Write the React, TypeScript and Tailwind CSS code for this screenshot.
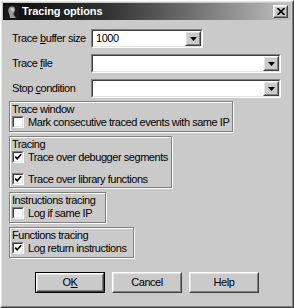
import React from "react";

const raisedOuter =
  "border border-t-white border-l-white border-r-[#404040] border-b-[#404040]";
const raisedInner =
  "border border-t-[#e4e4e4] border-l-[#e4e4e4] border-r-[#808080] border-b-[#808080]";
const sunkenOuter =
  "border border-t-[#808080] border-l-[#808080] border-r-white border-b-white";
const sunkenInner =
  "border border-t-[#404040] border-l-[#404040] border-r-[#e4e4e4] border-b-[#e4e4e4]";

function U({ children }: { children: React.ReactNode }) {
  return <span className="underline underline-offset-[1px]">{children}</span>;
}

function Check({ checked }: { checked?: boolean }) {
  return (
    <span className={`relative block w-[12px] h-[12px] shrink-0 bg-white ${sunkenOuter}`}>
      <span className={`absolute inset-0 ${sunkenInner}`} />
      {checked && (
        <svg
          className="absolute left-0 top-0"
          width="10"
          height="10"
          viewBox="0 0 10 10"
        >
          <path d="M2.2 4.6 L4.2 6.8 L8.2 2.3" fill="none" stroke="#000" strokeWidth="1.7" />
        </svg>
      )}
    </span>
  );
}

function Combo({ w, value }: { w: string; value?: string }) {
  return (
    <div className={`${w} h-[19px] bg-white ${sunkenOuter}`}>
      <div className={`flex h-full w-full ${sunkenInner}`}>
        <div className="flex-1 pl-[3px] leading-[15px]">{value}</div>
        <div className={`w-[16px] h-full bg-[#cacaca] ${raisedOuter}`}>
          <div className={`h-full w-full flex items-center justify-center ${raisedInner}`}>
            <svg width="7" height="4" viewBox="0 0 7 4">
              <path d="M0 0 H7 L3.5 4 Z" fill="#000" />
            </svg>
          </div>
        </div>
      </div>
    </div>
  );
}

function Group({
  w,
  h,
  title,
  children,
}: {
  w: string;
  h: string;
  title: string;
  children: React.ReactNode;
}) {
  return (
    <div
      className={`${w} ${h} border border-[#808080] shadow-[1px_1px_0_#fff,inset_1px_1px_0_#fff] pl-[2px]`}
    >
      <div className="h-[14px] leading-[14px]">{title}</div>
      {children}
    </div>
  );
}

function Row({ checked, label, extra }: { checked?: boolean; label: string; extra?: string }) {
  return (
    <div className={`flex items-center gap-[4px] h-[12px] ${extra ?? ""}`}>
      <Check checked={checked} />
      <span className="leading-[12px]">{label}</span>
    </div>
  );
}

function Button({ children, def }: { children: React.ReactNode; def?: boolean }) {
  const inner = (
    <div className={`h-full w-full bg-[#cacaca] ${raisedOuter}`}>
      <div className={`h-full w-full flex items-center justify-center ${raisedInner}`}>
        {children}
      </div>
    </div>
  );
  return def ? (
    <div className="w-[70px] h-[21px] border border-black">{inner}</div>
  ) : (
    <div className="w-[70px] h-[21px]">{inner}</div>
  );
}

export default function App() {
  return (
    <div
      className={`w-[294px] h-[308px] bg-[#cacaca] ${raisedOuter} font-['Liberation_Sans',Arial,sans-serif] text-[11px] tracking-[-0.45px] text-black`}
    >
      <div className={`h-full w-full p-[1px] ${raisedInner}`}>
        {/* Title bar */}
        <div className="h-[17px] flex items-center bg-linear-to-r from-[#0c0c0c] via-[#303030] via-35% to-[#c2c2c2]">
          <svg className="ml-[1px]" width="15" height="14" viewBox="0 0 15 14">
            <rect width="15" height="14" fill="#1a1a1a" />
            <path
              d="M6 13 C6 10 5 9 4.5 7 C3.8 4.5 5 1.5 8 1.5 C10.5 1.5 11.5 3.5 11 5.5 C10.7 7 9.5 7.5 9.5 9 C9.5 10.5 11 11.5 12 13 Z"
              fill="#9a9a9a"
            />
            <path d="M7 3 C8.5 2.5 10 3.5 9.8 5.2 C9.5 6.3 8.6 6.6 8 6 C7 5.3 6.8 4 7 3 Z" fill="#cfcfcf" />
          </svg>
          <span className="ml-[3px] font-bold text-white tracking-[-0.1px] leading-[17px]">
            Tracing options
          </span>
          <div className="flex-1" />
          <div className={`mr-[3px] w-[15px] h-[13px] bg-[#cacaca] ${raisedOuter}`}>
            <div className={`h-full w-full flex items-center justify-center ${raisedInner}`}>
              <svg width="8" height="7" viewBox="0 0 8 7">
                <path d="M0.5 0 L7.5 7 M7.5 0 L0.5 7" stroke="#000" strokeWidth="1.7" />
              </svg>
            </div>
          </div>
        </div>

        {/* Body */}
        <div className="pl-[6px] flex flex-col">
          <div className="mt-[9px] flex items-center">
            <div className="w-[82px] pl-[3px]">
              Trace <U>b</U>uffer size
            </div>
            <Combo w="w-[112px]" value="1000" />
          </div>
          <div className="mt-[6px] flex items-center">
            <div className="w-[82px] pl-[3px]">
              Trace <U>f</U>ile
            </div>
            <Combo w="w-[190px]" />
          </div>
          <div className="mt-[6px] flex items-center">
            <div className="w-[82px] pl-[3px]">
              Stop <U>c</U>ondition
            </div>
            <Combo w="w-[190px]" />
          </div>

          <div className="mt-[3px]">
            <Group w="w-[224px]" h="h-[31px]" title="Trace window">
              <Row label="Mark consecutive traced events with same IP" />
            </Group>
          </div>
          <div className="mt-[4px]">
            <Group w="w-[163px]" h="h-[52px]" title="Tracing">
              <Row checked label="Trace over debugger segments" />
              <Row checked label="Trace over library functions" extra="mt-[10px]" />
            </Group>
          </div>
          <div className="mt-[4px]">
            <Group w="w-[97px]" h="h-[31px]" title="Instructions tracing">
              <Row label="Log if same IP" />
            </Group>
          </div>
          <div className="mt-[4px]">
            <Group w="w-[125px]" h="h-[31px]" title="Functions tracing">
              <Row checked label="Log return instructions" />
            </Group>
          </div>
        </div>

        <div className="mt-[14px] flex justify-center gap-[7px]">
          <Button def>
            O<U>K</U>
          </Button>
          <Button>Cancel</Button>
          <Button>Help</Button>
        </div>
      </div>
    </div>
  );
}
